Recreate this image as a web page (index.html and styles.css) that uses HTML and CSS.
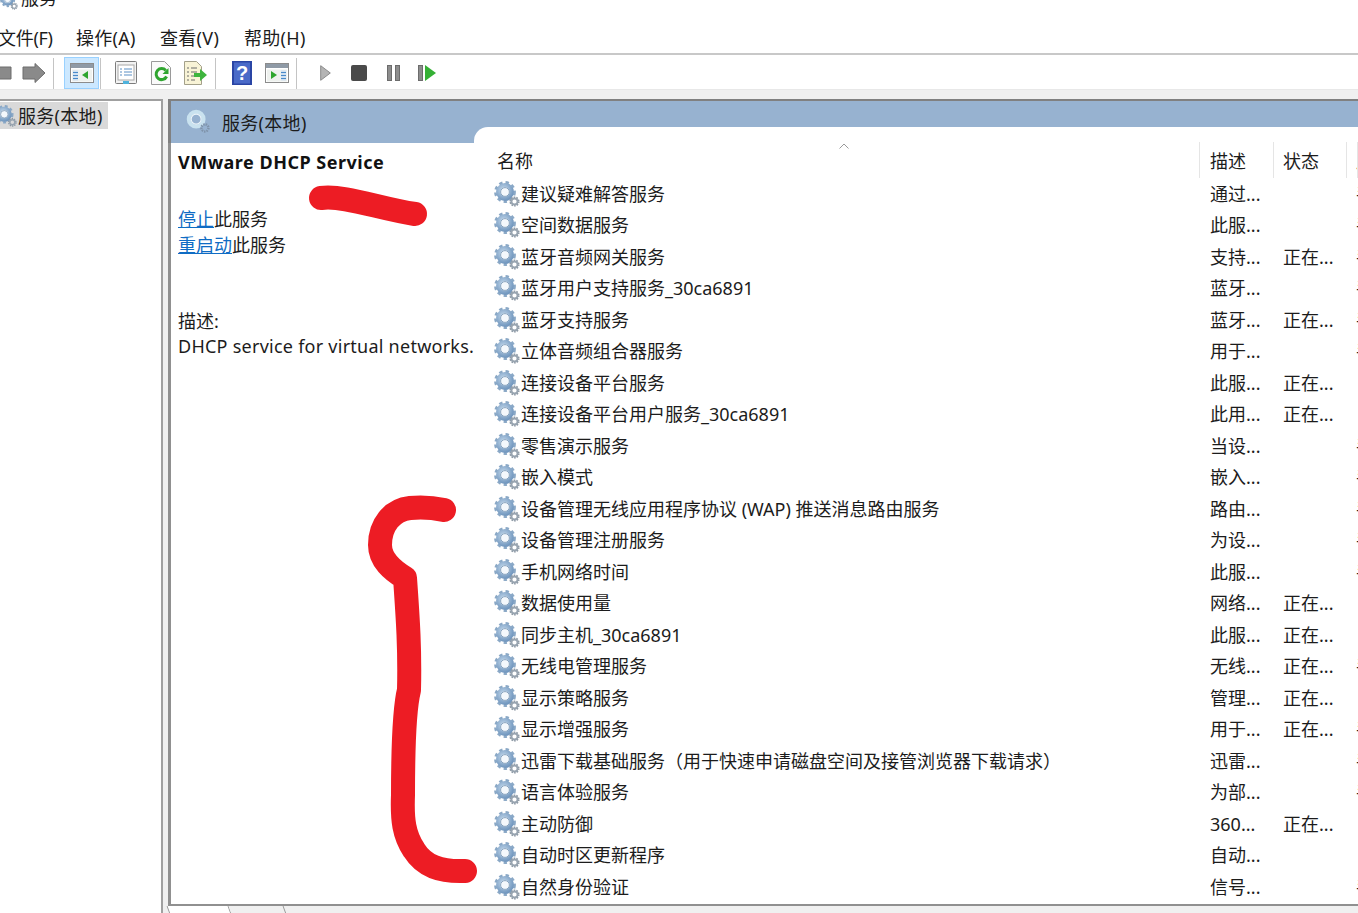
FILE: index.html
```html
<!DOCTYPE html>
<html lang="zh-CN">
<head>
<meta charset="utf-8">
<title>服务</title>
<link rel="stylesheet" href="styles.css">
</head>
<body>
<svg class="defs" width="0" height="0" aria-hidden="true">
  <defs>
    <radialGradient id="gb" cx="40%" cy="35%" r="75%"><stop offset="0" stop-color="#c6dbee"/><stop offset="1" stop-color="#7398bf"/></radialGradient>
    <symbol id="gear" viewBox="0 0 26 26">
      <circle cx="11" cy="11" r="9.6" fill="none" stroke="#8aa8c6" stroke-width="2.6" stroke-dasharray="3.4 3.1"/>
      <circle cx="11" cy="11" r="6.8" fill="none" stroke="url(#gb)" stroke-width="4.2"/>
      <circle cx="11" cy="11" r="4.4" fill="#f4f8fc" stroke="#6f8fb0" stroke-width=".8"/>
      <circle cx="20.5" cy="20.5" r="4.3" fill="none" stroke="#8b97a3" stroke-width="1.6" stroke-dasharray="1.6 1.1"/>
      <circle cx="20.5" cy="20.5" r="3" fill="none" stroke="#98a4b0" stroke-width="1.8"/>
    </symbol>
    <symbol id="gear-pale" viewBox="0 0 26 26">
      <circle cx="11" cy="11" r="8" fill="none" stroke="#c9e2ef" stroke-width="4.4"/>
      <circle cx="11" cy="11" r="5.4" fill="#97b2d0" stroke="#eef6fa" stroke-width="1.2"/>
      <circle cx="20.5" cy="20.5" r="3.8" fill="none" stroke="#7f93aa" stroke-width="2.6" stroke-dasharray="1.6 1"/>
    </symbol>
    <symbol id="panel" viewBox="0 0 24 20">
      <rect x=".5" y=".5" width="23" height="19" fill="#fff" stroke="#8c8c8c"/>
      <rect x="1" y="1" width="22" height="4" fill="#8f9aa6"/>
      <rect x="2" y="6.5" width="20" height="12" fill="#eef1ee"/>
    </symbol>
  </defs>
</svg>

<div class="titlebar">
  <svg class="title-gear"><use href="#gear"/></svg>
  <span class="title-text">服务</span>
</div>

<nav class="menubar">
  <span class="menu-item">文件(F)</span>
  <span class="menu-item">操作(A)</span>
  <span class="menu-item">查看(V)</span>
  <span class="menu-item">帮助(H)</span>
</nav>

<div class="toolbar">
  <div class="tool">
    <svg width="24" height="22" viewBox="0 0 24 22"><path d="M1 11 11 1.500V5h12v12H11v3.500z" fill="#8a8a8a" stroke="#6c6c6c"/></svg>
  </div>
  <div class="tool">
    <svg width="24" height="22" viewBox="0 0 24 22"><path d="M23 11 13 1.500V5H1v12h12v3.500z" fill="#8a8a8a" stroke="#6c6c6c"/></svg>
  </div>
  <span class="tool-sep first"></span>
  <div class="tool selected">
    <svg width="24" height="20" viewBox="0 0 24 20"><use href="#panel" width="24" height="20"/><rect x="3" y="7.5" width="5" height="10" fill="#cfe0f2"/><path d="M3 9.5h5M3 12.5h5M3 15.5h5" stroke="#4a8ac8"/><path d="M18 8v8l-6-4z" fill="#2ea52e"/></svg>
  </div>
  <span class="tool-sep tight"></span>
  <div class="tool-group one">
    <div class="tool">
      <svg width="22" height="24" viewBox="0 0 22 24"><rect x=".5" y=".5" width="21" height="22" rx="1" fill="#f3f3f3" stroke="#7c7c7c"/><rect x="3" y="4" width="16" height="15" fill="#fff" stroke="#a8a8a8"/><path d="M5 8h2M9 8h8M5 11h2M9 11h8M5 14h2M9 14h8" stroke="#5b8fc5"/><rect x="8" y="20" width="6" height="3" fill="#4fb3dd"/></svg>
    </div>
    <div class="tool">
      <svg width="20" height="24" viewBox="0 0 20 24"><path d="M.5.5h13l6 6v17H.5z" fill="#fafafa" stroke="#9a9a9a"/><path d="M14.800 9.500a5.500 5.500 0 1 0 .8 6" fill="none" stroke="#2fa52f" stroke-width="3"/><path d="M17.500 7v6h-6z" fill="#2fa52f"/></svg>
    </div>
    <div class="tool">
      <svg width="24" height="24" viewBox="0 0 24 24"><path d="M.5.5h12l5 5v18H.5z" fill="#f8f3d6" stroke="#a3a08a"/><path d="M3 7h2M7 7h6M3 11h2M7 11h6M3 15h2M7 15h4M3 19h2M7 19h4" stroke="#6a6a6a"/><path d="M10 12h6V8l7 6-7 6v-4h-6z" fill="#3eb53e"/></svg>
    </div>
  </div>
  <span class="tool-sep"></span>
  <div class="tool-group two">
    <div class="tool">
      <svg width="20" height="24" viewBox="0 0 20 24"><rect width="20" height="24" fill="#2a45a5"/><rect x="2" y="1.500" width="16" height="21" fill="#4a6ac8"/><text class="help-mark" x="10" y="19">?</text></svg>
    </div>
    <div class="tool">
      <svg width="24" height="20" viewBox="0 0 24 20"><use href="#panel" width="24" height="20"/><rect x="16" y="7.500" width="5" height="10" fill="#cfe0f2"/><path d="M16 9.500h5M16 12.500h5M16 15.500h5" stroke="#4a8ac8"/><path d="M6 8v8l6-4z" fill="#2ea52e"/></svg>
    </div>
  </div>
  <span class="tool-sep"></span>
  <div class="tool-group three">
    <div class="tool"><svg width="11" height="16" viewBox="0 0 11 16"><path d="M.7.700 10.300 8 .7 15.300z" fill="#b4b4b4" stroke="#8a8a8a"/></svg></div>
    <div class="tool"><svg width="16" height="16" viewBox="0 0 16 16"><rect width="16" height="16" rx="2" fill="#4a4a4a"/></svg></div>
    <div class="tool"><svg width="13" height="16" viewBox="0 0 13 16"><rect x=".5" y=".5" width="4" height="15" fill="#8d8d8d" stroke="#6c6c6c"/><rect x="8.500" y=".5" width="4" height="15" fill="#8d8d8d" stroke="#6c6c6c"/></svg></div>
    <div class="tool"><svg width="18" height="16" viewBox="0 0 18 16"><rect x=".5" y=".5" width="4" height="15" fill="#8d8d8d" stroke="#6c6c6c"/><path d="M7 0l11 8-11 8z" fill="#35b035"/></svg></div>
  </div>
</div>

<main class="workspace">
  <aside class="tree">
    <div class="tree-item">
      <svg class="gear tree-gear"><use href="#gear"/></svg>
      <span>服务(本地)</span>
    </div>
  </aside>

  <section class="pane">
    <header class="pane-head">
      <svg class="pane-gear"><use href="#gear-pale"/></svg>
      <span class="pane-title">服务(本地)</span>
    </header>
    <div class="pane-body">
      <div class="detail">
        <h1 class="detail-title">VMware DHCP Service</h1>
        <p class="detail-actions"><a class="link">停止</a>此服务<br><a class="link">重启动</a>此服务</p>
        <p class="detail-desc">描述:<br><span class="desc-text">DHCP service for virtual networks.</span></p>
      </div>
      <div class="list">
        <div class="list-head">
          <span class="cell name">名称<svg class="sort" width="10" height="6" viewBox="0 0 10 6"><path d="M.5 5.500 5 1l4.500 4.500" fill="none" stroke="#9a9a9a"/></svg></span>
          <span class="cell desc">描述</span>
          <span class="cell state">状态</span>
          <span class="cell start">启动类型</span>
        </div>
        <div class="row"><span class="cell name"><svg class="gear"><use href="#gear"/></svg>建议疑难解答服务</span><span class="cell desc">通过...</span><span class="cell state"></span><span class="cell start">手动</span></div>
        <div class="row"><span class="cell name"><svg class="gear"><use href="#gear"/></svg>空间数据服务</span><span class="cell desc">此服...</span><span class="cell state"></span><span class="cell start">手动</span></div>
        <div class="row"><span class="cell name"><svg class="gear"><use href="#gear"/></svg>蓝牙音频网关服务</span><span class="cell desc">支持...</span><span class="cell state">正在...</span><span class="cell start">手动</span></div>
        <div class="row"><span class="cell name"><svg class="gear"><use href="#gear"/></svg>蓝牙用户支持服务_30ca6891</span><span class="cell desc">蓝牙...</span><span class="cell state"></span><span class="cell start">手动</span></div>
        <div class="row"><span class="cell name"><svg class="gear"><use href="#gear"/></svg>蓝牙支持服务</span><span class="cell desc">蓝牙...</span><span class="cell state">正在...</span><span class="cell start">手动</span></div>
        <div class="row"><span class="cell name"><svg class="gear"><use href="#gear"/></svg>立体音频组合器服务</span><span class="cell desc">用于...</span><span class="cell state"></span><span class="cell start">手动</span></div>
        <div class="row"><span class="cell name"><svg class="gear"><use href="#gear"/></svg>连接设备平台服务</span><span class="cell desc">此服...</span><span class="cell state">正在...</span><span class="cell start"></span></div>
        <div class="row"><span class="cell name"><svg class="gear"><use href="#gear"/></svg>连接设备平台用户服务_30ca6891</span><span class="cell desc">此用...</span><span class="cell state">正在...</span><span class="cell start"></span></div>
        <div class="row"><span class="cell name"><svg class="gear"><use href="#gear"/></svg>零售演示服务</span><span class="cell desc">当设...</span><span class="cell state"></span><span class="cell start">手动</span></div>
        <div class="row"><span class="cell name"><svg class="gear"><use href="#gear"/></svg>嵌入模式</span><span class="cell desc">嵌入...</span><span class="cell state"></span><span class="cell start">手动</span></div>
        <div class="row"><span class="cell name"><svg class="gear"><use href="#gear"/></svg>设备管理无线应用程序协议 (WAP) 推送消息路由服务</span><span class="cell desc">路由...</span><span class="cell state"></span><span class="cell start">手动</span></div>
        <div class="row"><span class="cell name"><svg class="gear"><use href="#gear"/></svg>设备管理注册服务</span><span class="cell desc">为设...</span><span class="cell state"></span><span class="cell start">手动</span></div>
        <div class="row"><span class="cell name"><svg class="gear"><use href="#gear"/></svg>手机网络时间</span><span class="cell desc">此服...</span><span class="cell state"></span><span class="cell start">手动</span></div>
        <div class="row"><span class="cell name"><svg class="gear"><use href="#gear"/></svg>数据使用量</span><span class="cell desc">网络...</span><span class="cell state">正在...</span><span class="cell start"></span></div>
        <div class="row"><span class="cell name"><svg class="gear"><use href="#gear"/></svg>同步主机_30ca6891</span><span class="cell desc">此服...</span><span class="cell state">正在...</span><span class="cell start"></span></div>
        <div class="row"><span class="cell name"><svg class="gear"><use href="#gear"/></svg>无线电管理服务</span><span class="cell desc">无线...</span><span class="cell state">正在...</span><span class="cell start">手动</span></div>
        <div class="row"><span class="cell name"><svg class="gear"><use href="#gear"/></svg>显示策略服务</span><span class="cell desc">管理...</span><span class="cell state">正在...</span><span class="cell start"></span></div>
        <div class="row"><span class="cell name"><svg class="gear"><use href="#gear"/></svg>显示增强服务</span><span class="cell desc">用于...</span><span class="cell state">正在...</span><span class="cell start">手动</span></div>
        <div class="row"><span class="cell name"><svg class="gear"><use href="#gear"/></svg>迅雷下载基础服务（用于快速申请磁盘空间及接管浏览器下载请求）</span><span class="cell desc">迅雷...</span><span class="cell state"></span><span class="cell start">手动</span></div>
        <div class="row"><span class="cell name"><svg class="gear"><use href="#gear"/></svg>语言体验服务</span><span class="cell desc">为部...</span><span class="cell state"></span><span class="cell start">手动</span></div>
        <div class="row"><span class="cell name"><svg class="gear"><use href="#gear"/></svg>主动防御</span><span class="cell desc">360...</span><span class="cell state">正在...</span><span class="cell start"></span></div>
        <div class="row"><span class="cell name"><svg class="gear"><use href="#gear"/></svg>自动时区更新程序</span><span class="cell desc">自动...</span><span class="cell state"></span><span class="cell start">自动</span></div>
        <div class="row"><span class="cell name"><svg class="gear"><use href="#gear"/></svg>自然身份验证</span><span class="cell desc">信号...</span><span class="cell state"></span><span class="cell start">手动</span></div>
      </div>
    </div>
    <div class="tabs"><span class="tab"></span><span class="tab second"></span></div>
  </section>
</main>

<svg class="ink" width="1358" height="913" viewBox="0 0 1358 913" aria-hidden="true">
  <path d="M321 198C345 195 380 209 415 214"/>
  <path d="M444 510C430 507 420 507 410 508C392 510 380 525 380 545C380 560 392 570 405 578C408 620 410 650 409 690C404 710 403 750 403 795C402 820 404 835 414 850C424 866 440 872 465 871"/>
</svg>
</body>
</html>
```

FILE: styles.css
```css
* { box-sizing: border-box; }
html, body { margin: 0; padding: 0; }
body {
  position: relative;
  width: 1358px;
  height: 913px;
  overflow: hidden;
  background: #f0f0f0;
  color: #1c1c1c;
  font: 18px/26px "Noto Sans", "Noto Sans CJK SC", sans-serif;
  display: flex;
  flex-direction: column;
}
.defs { position: absolute; }

.titlebar {
  height: 18px;
  background: #fff;
  display: flex;
  gap: 3px;
  overflow: hidden;
}
.title-gear { width: 18px; height: 18px; margin-top: -8px; flex: none; }
.title-text { margin-top: -15px; }

.menubar {
  height: 37px;
  background: #fff;
  border-bottom: 2px solid #c8c8c8;
  display: flex;
  gap: 24px;
  align-items: center;
  padding: 4px 0 0;
  margin-left: -2px;
}
.menu-item { width: 60px; white-space: nowrap; letter-spacing: .3px; }
.menu-item:first-child { width: 54px; letter-spacing: -.3px; }

.toolbar {
  height: 35px;
  background: #fff;
  border-bottom: 1px solid #e8e8e8;
  display: flex;
  align-items: center;
  padding-top: 2px;
  margin-left: -17px;
}
.tool {
  width: 34px;
  height: 32px;
  flex: none;
  display: flex;
  align-items: center;
  justify-content: center;
}
.tool.selected {
  width: 35px;
  height: 32px;
  margin-left: 10px;
  background: #cce8ff;
  border: 1px solid #99d1ff;
}
.tool-sep { width: 1px; height: 31px; background: #c4c4c4; margin-left: 2px; flex: none; }
.tool-sep.first { margin-left: 2px; }
.tool-sep.tight { margin-left: 1px; }
.tool-group { display: flex; }
.tool-group.one { margin-left: 8px; gap: 1px; }
.tool-group.two { margin-left: 9px; gap: 1px; }
.tool-group.three { margin-left: 11px; }
.help-mark { fill: #fff; font: bold 20px "Liberation Sans", sans-serif; text-anchor: middle; }

.workspace {
  flex: 1;
  min-height: 0;
  display: flex;
  gap: 5px;
  padding-top: 9px;
}
.tree {
  width: 163px;
  background: #fff;
  border-top: 2px solid #a0a0a0;
  border-right: 2px solid #a0a0a0;
  padding-top: 1px;
  flex: none;
}
.tree-item {
  width: 108px;
  height: 27px;
  background: #d9d9d9;
  display: flex;
  align-items: center;
  white-space: nowrap;
  letter-spacing: .3px;
}
.gear { width: 26px; height: 26px; flex: none; }
.tree-gear { width: 22px; height: 22px; margin: 0 1px 0 -5px; }

.pane {
  flex: 1;
  min-width: 0;
  display: flex;
  flex-direction: column;
}
.pane-head {
  height: 44px;
  flex: none;
  background: #97b2d0;
  border: 2px solid #808080;
  border-width: 2px 0 0 3px;
  display: flex;
  align-items: flex-start;
  padding: 8px 0 0 15px;
  gap: 12px;
}
.pane-gear { width: 24px; height: 24px; flex: none; }
.pane-title { margin-top: 1px; letter-spacing: .3px; }
.pane-body {
  height: 763px;
  flex: none;
  background: #fff;
  border-left: 3px solid #909090;
  border-bottom: 2px solid #909090;
  display: flex;
}
.detail { width: 303px; flex: none; padding: 6px 0 0 7px; white-space: nowrap; }
.detail-title { margin: 0; font-size: 18px; line-height: 26px; font-weight: 700; color: #111; letter-spacing: .5px; }
.detail-actions { margin: 31px 0 0; }
.link { color: #0f6cc4; text-decoration: underline; }
.detail-desc { margin: 51px 0 0; line-height: 25px; }
.desc-text { letter-spacing: .25px; }

.list {
  width: 884px;
  height: 777px;
  flex: none;
  margin-top: -16px;
  background: #fff;
  border-top-left-radius: 14px;
  position: relative;
  overflow: hidden;
}
.list-head, .row { display: flex; white-space: nowrap; }
.list-head { height: 50.75px; padding-top: 15px; align-items: stretch; }
.row { height: 31.5px; align-items: center; }
.cell { flex: none; overflow: hidden; display: flex; align-items: center; }
.cell.name { width: 726px; padding-left: 20px; }
.cell.desc { width: 74px; padding-left: 10px; }
.cell.state { width: 73px; padding-left: 9px; }
.cell.start { width: 11px; padding-left: 9px; }
.list-head .cell { border-right: 1px solid #e5e5e5; padding-top: 2px; }
.list-head .cell.name { padding-left: 23px; position: relative; overflow: visible; }
.sort { position: absolute; left: 365px; top: 1px; }
.row .gear { margin-right: 1px; }

.tabs { flex: 1; display: flex; }
.tab {
  width: 62px;
  height: 8px;
  background: #fff;
  border-left: 1px solid #9a9a9a;
  border-right: 1px solid #9a9a9a;
  transform: skewX(20deg);
}
.tab.second { width: 55px; background: #f0f0f0; border-left: 0; }

.ink { position: absolute; left: 0; top: 0; pointer-events: none; }
.ink path {
  fill: none;
  stroke: #ed1c24;
  stroke-width: 24;
  stroke-linecap: round;
  stroke-linejoin: round;
}
```
